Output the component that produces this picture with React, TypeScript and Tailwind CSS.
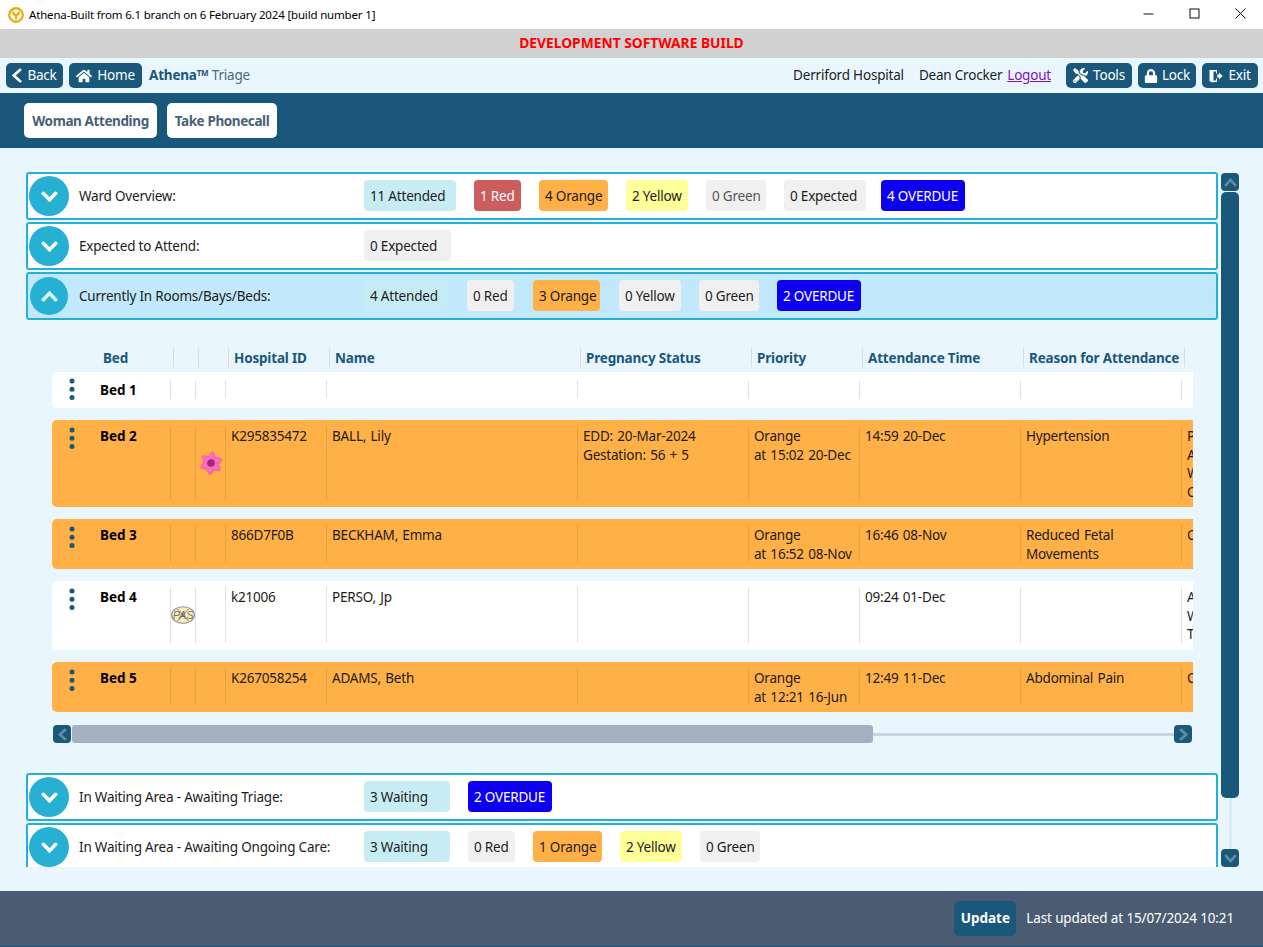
import React from "react";
import { FaHome, FaTools, FaLock } from "react-icons/fa";

const COLS = "grid grid-cols-[118px_25px_30px_101px_251px_171px_111px_161px_161px_160px]";
const TXT = "text-[13.5px] tracking-[-0.2px]";
const BOLD = "text-[13.5px] font-bold";

function Chev({ dir, w, h, sw, className }: { dir: "up" | "down" | "left" | "right"; w: number; h: number; sw: number; className?: string }) {
  const d =
    dir === "down" ? `M${sw / 2 + 0.5} ${sw / 2 + 0.5} L${w / 2} ${h - sw / 2 - 0.5} L${w - sw / 2 - 0.5} ${sw / 2 + 0.5}`
    : dir === "up" ? `M${sw / 2 + 0.5} ${h - sw / 2 - 0.5} L${w / 2} ${sw / 2 + 0.5} L${w - sw / 2 - 0.5} ${h - sw / 2 - 0.5}`
    : dir === "left" ? `M${w - sw / 2 - 0.5} ${sw / 2 + 0.5} L${sw / 2 + 0.5} ${h / 2} L${w - sw / 2 - 0.5} ${h - sw / 2 - 0.5}`
    : `M${sw / 2 + 0.5} ${sw / 2 + 0.5} L${w - sw / 2 - 0.5} ${h / 2} L${sw / 2 + 0.5} ${h - sw / 2 - 0.5}`;
  return (
    <svg width={w} height={h} viewBox={`0 0 ${w} ${h}`} className={className}>
      <path d={d} fill="none" stroke="currentColor" strokeWidth={sw} strokeLinecap="round" strokeLinejoin="miter" />
    </svg>
  );
}

function ExitIcon() {
  return (
    <svg width="14" height="14" viewBox="0 0 14 14" fill="currentColor">
      <path d="M0.5 1 H8 V4.5 H7 V2.5 H4.5 V11.5 H7 V9.5 H8 V13 H4.5 V13.8 L0.5 12.3 Z" />
      <path d="M8.2 5.6 H10 V3.6 L13.6 7 L10 10.4 V8.4 H8.2 Z" />
    </svg>
  );
}

function NavBtn({ icon, label, w, gap }: { icon: React.ReactNode; label: string; w: string; gap: string }) {
  return (
    <button className={`${w} ${gap} h-[25px] rounded-[5px] bg-[#19587a] text-white ${TXT} flex items-center justify-center leading-none`}>
      {icon}
      <span>{label}</span>
    </button>
  );
}

type B = { t: string; w: string; c: string };
const att = "bg-[#c8ecf4] text-[#1c1c1c]";
const red = "bg-[#cd5c5c] text-white";
const org = "bg-[#ffb046] text-[#1c1c1c]";
const yel = "bg-[#ffff99] text-[#1c1c1c]";
const gry = "bg-[#f0f0f0] text-[#1c1c1c]";
const gr2 = "bg-[#f0f0f0] text-[#555555]";
const ovd = "bg-[#0c00ee] text-white";

function Panel({ label, open, badges }: { label: string; open?: boolean; badges: B[] }) {
  return (
    <div className={`h-[48px] shrink-0 border-2 border-[#26b0d4] rounded-[3px] flex items-center ${open ? "bg-[#c2e8fb]" : "bg-white"}`}>
      <div className={`${open ? "w-[38px] h-[38px] ml-[2px]" : "w-[40px] h-[40px] ml-px"} shrink-0 rounded-full bg-[#26b0d4] flex items-center justify-center`}>
        {open ? <Chev dir="up" w={17} h={11} sw={3.6} className="text-[#d9f1f7]" /> : <Chev dir="down" w={17} h={11} sw={3.6} className="text-white" />}
      </div>
      <div className={`${open ? "ml-[11px]" : "ml-[10px]"} w-[285px] ${TXT} text-[#1c1c1c] shrink-0`}>{label}</div>
      <div className="flex mb-[1px]">
        {badges.map((b, i) => (
          <div key={i} className={`${b.w} h-[31px] rounded-[4px] ${b.c} ${TXT} flex items-center pl-[6px] pt-[1px] whitespace-nowrap`}>
            {b.t}
          </div>
        ))}
      </div>
    </div>
  );
}

function Dots({ up }: { up?: boolean }) {
  return (
    <div className="h-0 w-[6px] ml-[17px] shrink-0">
      <svg width="6" height="22" viewBox="0 0 6 22" className={`${up ? "-mt-[2px]" : "mt-[1px]"} fill-[#19587a]`}>
        <circle cx="3" cy="3" r="2.5" />
        <circle cx="3" cy="11.2" r="2.5" />
        <circle cx="3" cy="19.4" r="2.5" />
      </svg>
    </div>
  );
}

function Flower() {
  const petals = [0, 60, 120, 180, 240, 300];
  return (
    <svg width="24" height="24" viewBox="0 0 24 24" className="shrink-0">
      {petals.map((a) => (
        <path key={`s${a}`} d="M12 12 C6.5 8.5 8 4 12 0.5 C16 4 17.5 8.5 12 12 Z" transform={`translate(0.6 0.9) rotate(${a + 8} 12 12)`} fill="#c9963a" />
      ))}
      {petals.map((a) => (
        <path key={a} d="M12 12 C6.5 8.5 8 4 12 0.5 C16 4 17.5 8.5 12 12 Z" transform={`rotate(${a + 8} 12 12)`} fill="#fb6cc4" stroke="#ee4fae" strokeWidth="0.4" />
      ))}
      <circle cx="12" cy="12" r="3.8" fill="#a22a78" />
    </svg>
  );
}

function Pas() {
  return (
    <svg width="24" height="18" viewBox="0 0 24 18" className="shrink-0">
      <ellipse cx="12" cy="9" rx="11.4" ry="8.3" fill="#fbeac0" stroke="#8a8a8a" strokeWidth="1.1" />
      <text x="12" y="13" textAnchor="middle" fontSize="11" fontStyle="italic" fill="#777777" fontFamily="Liberation Sans, sans-serif">PAS</text>
      <path d="M6.5 3 L17.5 15 M17.5 3 L6.5 15" stroke="#555" strokeWidth="0.7" />
    </svg>
  );
}

type Row = {
  bed: string; bg: "w" | "o"; one?: boolean; tall?: boolean; icon2?: React.ReactNode; icon3?: React.ReactNode;
  id?: string; name?: string; preg?: string[]; pri?: string[]; time?: string; reason?: string[]; last?: string[];
};

const rows: Row[] = [
  { bed: "Bed 1", bg: "w", one: true },
  { bed: "Bed 2", bg: "o", icon3: <Flower />, id: "K295835472", name: "BALL, Lily", preg: ["EDD: 20-Mar-2024", "Gestation: 56 + 5"], pri: ["Orange", "at 15:02 20-Dec"], time: "14:59 20-Dec", reason: ["Hypertension"], last: ["P", "A", "W", "O"] },
  { bed: "Bed 3", bg: "o", id: "866D7F0B", name: "BECKHAM, Emma", pri: ["Orange", "at 16:52 08-Nov"], time: "16:46 08-Nov", reason: ["Reduced Fetal", "Movements"], last: ["O"] },
  { bed: "Bed 4", bg: "w", tall: true, icon2: <Pas />, id: "k21006", name: "PERSO, Jp", time: "09:24 01-Dec", last: ["A", "W", "T"] },
  { bed: "Bed 5", bg: "o", id: "K267058254", name: "ADAMS, Beth", pri: ["Orange", "at 12:21 16-Jun"], time: "12:49 11-Dec", reason: ["Abdominal Pain"], last: ["O"] },
];

function Cell({ children, line, center }: { children?: React.ReactNode; line: string; center?: boolean }) {
  return (
    <div className={`border-l ${line} whitespace-nowrap ${center ? "flex items-center justify-center" : "pl-[5px] overflow-hidden"}`}>
      {center ? children : <div className="translate-y-px">{children}</div>}
    </div>
  );
}

function Lines({ l }: { l?: string[] }) {
  return <>{l?.map((s, i) => <div key={i}>{s}</div>)}</>;
}

function TableRow({ r }: { r: Row }) {
  const line = r.bg === "o" ? "border-[#e5a040]" : "border-[#dfe3e6]";
  return (
    <div className={`rounded-l-[5px] ${r.bg === "o" ? "bg-[#ffb046]" : "bg-white"} ${r.one ? "pt-[8px] pb-[9px]" : "pt-[6px] pb-[7px]"} ${TXT} [word-spacing:1px] leading-[18.5px] text-[#1c1c1c]`}>
      <div className={`${COLS} ${r.one ? "h-[19px]" : ""} ${r.tall ? "h-[56px]" : ""}`}>
        <div className="flex">
          <Dots up={r.one} />
          <div className={`ml-[25px] ${BOLD} tracking-normal [word-spacing:0] translate-y-px text-black`}>{r.bed}</div>
        </div>
        <Cell line={line} center>{r.icon2}</Cell>
        <Cell line={line} center>{r.icon3}</Cell>
        <Cell line={line}>{r.id}</Cell>
        <Cell line={line}>{r.name}</Cell>
        <Cell line={line}><Lines l={r.preg} /></Cell>
        <Cell line={line}><Lines l={r.pri} /></Cell>
        <Cell line={line}>{r.time}</Cell>
        <Cell line={line}><Lines l={r.reason} /></Cell>
        <Cell line={line}><Lines l={r.last} /></Cell>
      </div>
    </div>
  );
}

const heads = ["", "", "Hospital ID", "Name", "Pregnancy Status", "Priority", "Attendance Time", "Reason for Attendance", ""];

function ScrollBtn({ children }: { children: React.ReactNode }) {
  return (
    <div className="w-[18px] h-[18px] shrink-0 rounded-[4px] bg-[#19587a] text-[#5e8aa3] flex items-center justify-center">{children}</div>
  );
}

export default function App() {
  return (
    <div className="w-[1263px] h-[947px] overflow-hidden flex flex-col bg-[#e9f6fe] font-['Noto_Sans','Open_Sans',sans-serif]">
      {/* title bar */}
      <div className="h-[29px] shrink-0 bg-white flex items-center text-[11.5px] tracking-[-0.17px] text-black">
        <svg width="16" height="16" viewBox="0 0 16 16" className="ml-[8px]">
          <circle cx="8" cy="8" r="6.8" fill="#fff8e0" stroke="#e8ab10" strokeWidth="2.2" />
          <path d="M4.6 4.6 Q5.5 8 8 8.5 Q10.5 8 11.4 4.6 M8 8.5 V12.5" stroke="#e8ab10" strokeWidth="2" fill="none" />
        </svg>
        <span className="ml-[5px]">Athena-Built from 6.1 branch on 6 February 2024 [build number 1]</span>
        <div className="ml-auto flex items-center mr-[17px] gap-[35px] mb-[2px]">
          <svg width="11" height="11" viewBox="0 0 11 11"><path d="M0.5 6 H10.5" stroke="#111" strokeWidth="1" /></svg>
          <svg width="11" height="11" viewBox="0 0 11 11"><rect x="1" y="1" width="9" height="9" fill="none" stroke="#111" strokeWidth="1" /></svg>
          <svg width="11" height="11" viewBox="0 0 11 11"><path d="M0.5 0.5 L10.5 10.5 M10.5 0.5 L0.5 10.5" stroke="#111" strokeWidth="1" /></svg>
        </div>
      </div>
      {/* banner */}
      <div className="h-[29px] shrink-0 bg-[#d1d1d1] flex items-center justify-center text-[13.8px] font-bold text-[#ff0000]">
        DEVELOPMENT SOFTWARE BUILD
      </div>
      {/* nav */}
      <div className="h-[35px] shrink-0 flex items-center pl-[6px] pr-[5px]">
        <NavBtn w="w-[57px]" gap="gap-[5px]" icon={<Chev dir="left" w={10} h={15} sw={2.6} />} label="Back" />
        <div className="w-[6px]" />
        <NavBtn w="w-[73px]" gap="gap-[5px]" icon={<FaHome size={16} />} label="Home" />
        <div className={`ml-[7px] ${TXT} text-[#4a6a80]`}>
          <span className={`${BOLD} text-[#19587a]`}>Athena<sup className="text-[8px]">TM</sup></span> Triage
        </div>
        <div className={`ml-auto ${TXT} text-[#1c1c1c]`}>Derriford Hospital</div>
        <div className={`ml-[15px] ${TXT} text-[#1c1c1c]`}>Dean Crocker</div>
        <a className={`ml-[5px] ${TXT} text-[#8010c0] underline`}>Logout</a>
        <div className="w-[15px]" />
        <NavBtn w="w-[66px]" gap="gap-[5px]" icon={<FaTools size={15} />} label="Tools" />
        <div className="w-[6px]" />
        <NavBtn w="w-[58px]" gap="gap-[4px]" icon={<FaLock size={14} />} label="Lock" />
        <div className="w-[6px]" />
        <NavBtn w="w-[56px]" gap="gap-[5px]" icon={<ExitIcon />} label="Exit" />
      </div>
      {/* actions */}
      <div className="h-[55px] shrink-0 bg-[#19587a] flex items-center pl-[24px] gap-[10px]">
        <button className={`w-[133px] h-[35px] pt-[2px] rounded-[5px] bg-white ${BOLD} tracking-[-0.4px] text-[#475f78]`}>Woman Attending</button>
        <button className={`w-[110px] h-[35px] pt-[2px] rounded-[5px] bg-white ${BOLD} tracking-[-0.4px] text-[#475f78]`}>Take Phonecall</button>
      </div>
      {/* content */}
      <div className="flex-1 min-h-0 pl-[26px] pt-[24px]">
        <div className="h-[695px] flex gap-[3px]">
          <div className="w-[1192px] h-[695px] overflow-hidden flex flex-col gap-[2px]">
            <Panel label="Ward Overview:" badges={[
              { t: "11 Attended", w: "w-[92px] mr-[18px]", c: att },
              { t: "1 Red", w: "w-[47px] mr-[18px]", c: red },
              { t: "4 Orange", w: "w-[69px] mr-[18px]", c: org },
              { t: "2 Yellow", w: "w-[62px] mr-[18px]", c: yel },
              { t: "0 Green", w: "w-[60px] mr-[18px]", c: gr2 },
              { t: "0 Expected", w: "w-[82px] mr-[15px]", c: gry },
              { t: "4 OVERDUE", w: "w-[84px]", c: ovd },
            ]} />
            <Panel label="Expected to Attend:" badges={[{ t: "0 Expected", w: "w-[87px]", c: gry }]} />
            <Panel label="Currently In Rooms/Bays/Beds:" open badges={[
              { t: "4 Attended", w: "w-[84px] mr-[19px]", c: "bg-[#c5ecf4] text-[#1c1c1c]" },
              { t: "0 Red", w: "w-[47px] mr-[19px]", c: gry },
              { t: "3 Orange", w: "w-[67px] mr-[19px]", c: org },
              { t: "0 Yellow", w: "w-[62px] mr-[18px]", c: gry },
              { t: "0 Green", w: "w-[60px] mr-[18px]", c: gry },
              { t: "2 OVERDUE", w: "w-[84px]", c: ovd },
            ]} />
            {/* expanded */}
            <div className="ml-[26px] w-[1141px] shrink-0 mt-[26px] flex flex-col">
              <div className={`${COLS} ml-[3px] h-[20px] items-stretch ${BOLD} tracking-[-0.18px] text-[#19587a] leading-[20px] overflow-hidden`}>
                <div className="pl-[48px]">Bed</div>
                {heads.map((h, i) => (
                  <div key={i} className="border-l border-[#cfdfe8] pl-[5px] whitespace-nowrap overflow-hidden h-[19px]">{h}</div>
                ))}
              </div>
              <div className="mt-[4px] flex flex-col gap-[12px] overflow-hidden">
                {rows.map((r) => <TableRow key={r.bed} r={r} />)}
              </div>
              <div className="mt-[13px] ml-px w-[1139px] flex items-center">
                <ScrollBtn><Chev dir="left" w={9} h={13} sw={2.8} /></ScrollBtn>
                <div className="flex-1 flex items-center h-[18px]">
                  <div className="w-[801px] h-[18px] rounded-[3px] bg-[#a4b1c1] ml-px shrink-0" />
                  <div className="flex-1 h-[3px] bg-[#c9d3de]" />
                </div>
                <ScrollBtn><Chev dir="right" w={9} h={13} sw={2.8} /></ScrollBtn>
              </div>
            </div>
            <div className="mt-[28px] shrink-0">
              <Panel label="In Waiting Area - Awaiting Triage:" badges={[
                { t: "3 Waiting", w: "w-[86px] mr-[18px]", c: att },
                { t: "2 OVERDUE", w: "w-[84px]", c: ovd },
              ]} />
            </div>
            <Panel label="In Waiting Area - Awaiting Ongoing Care:" badges={[
              { t: "3 Waiting", w: "w-[86px] mr-[18px]", c: att },
              { t: "0 Red", w: "w-[47px] mr-[18px]", c: gry },
              { t: "1 Orange", w: "w-[69px] mr-[18px]", c: org },
              { t: "2 Yellow", w: "w-[62px] mr-[18px]", c: yel },
              { t: "0 Green", w: "w-[60px]", c: gry },
            ]} />
          </div>
          <div className="w-[18px] h-[694px] mt-px flex flex-col items-center">
            <ScrollBtn><Chev dir="up" w={13} h={9} sw={2.8} /></ScrollBtn>
            <div className="w-[18px] h-[606px] mt-px shrink-0 rounded-[5px] bg-[#19587a]" />
            <div className="w-[3px] flex-1 bg-[#d5eefc]" />
            <ScrollBtn><Chev dir="down" w={13} h={9} sw={2.8} /></ScrollBtn>
          </div>
        </div>
      </div>
      {/* footer */}
      <div className={`h-[56px] shrink-0 bg-[#4b5c72] border-b border-[#19587a] flex items-center justify-end pr-[29px] text-white text-[13.5px]`}>
        <button className={`w-[62px] h-[35px] rounded-[5px] bg-[#19587a] ${BOLD} tracking-normal`}>Update</button>
        <span className="ml-[10px] tracking-[-0.14px]">Last updated at 15/07/2024 10:21</span>
      </div>
    </div>
  );
}
